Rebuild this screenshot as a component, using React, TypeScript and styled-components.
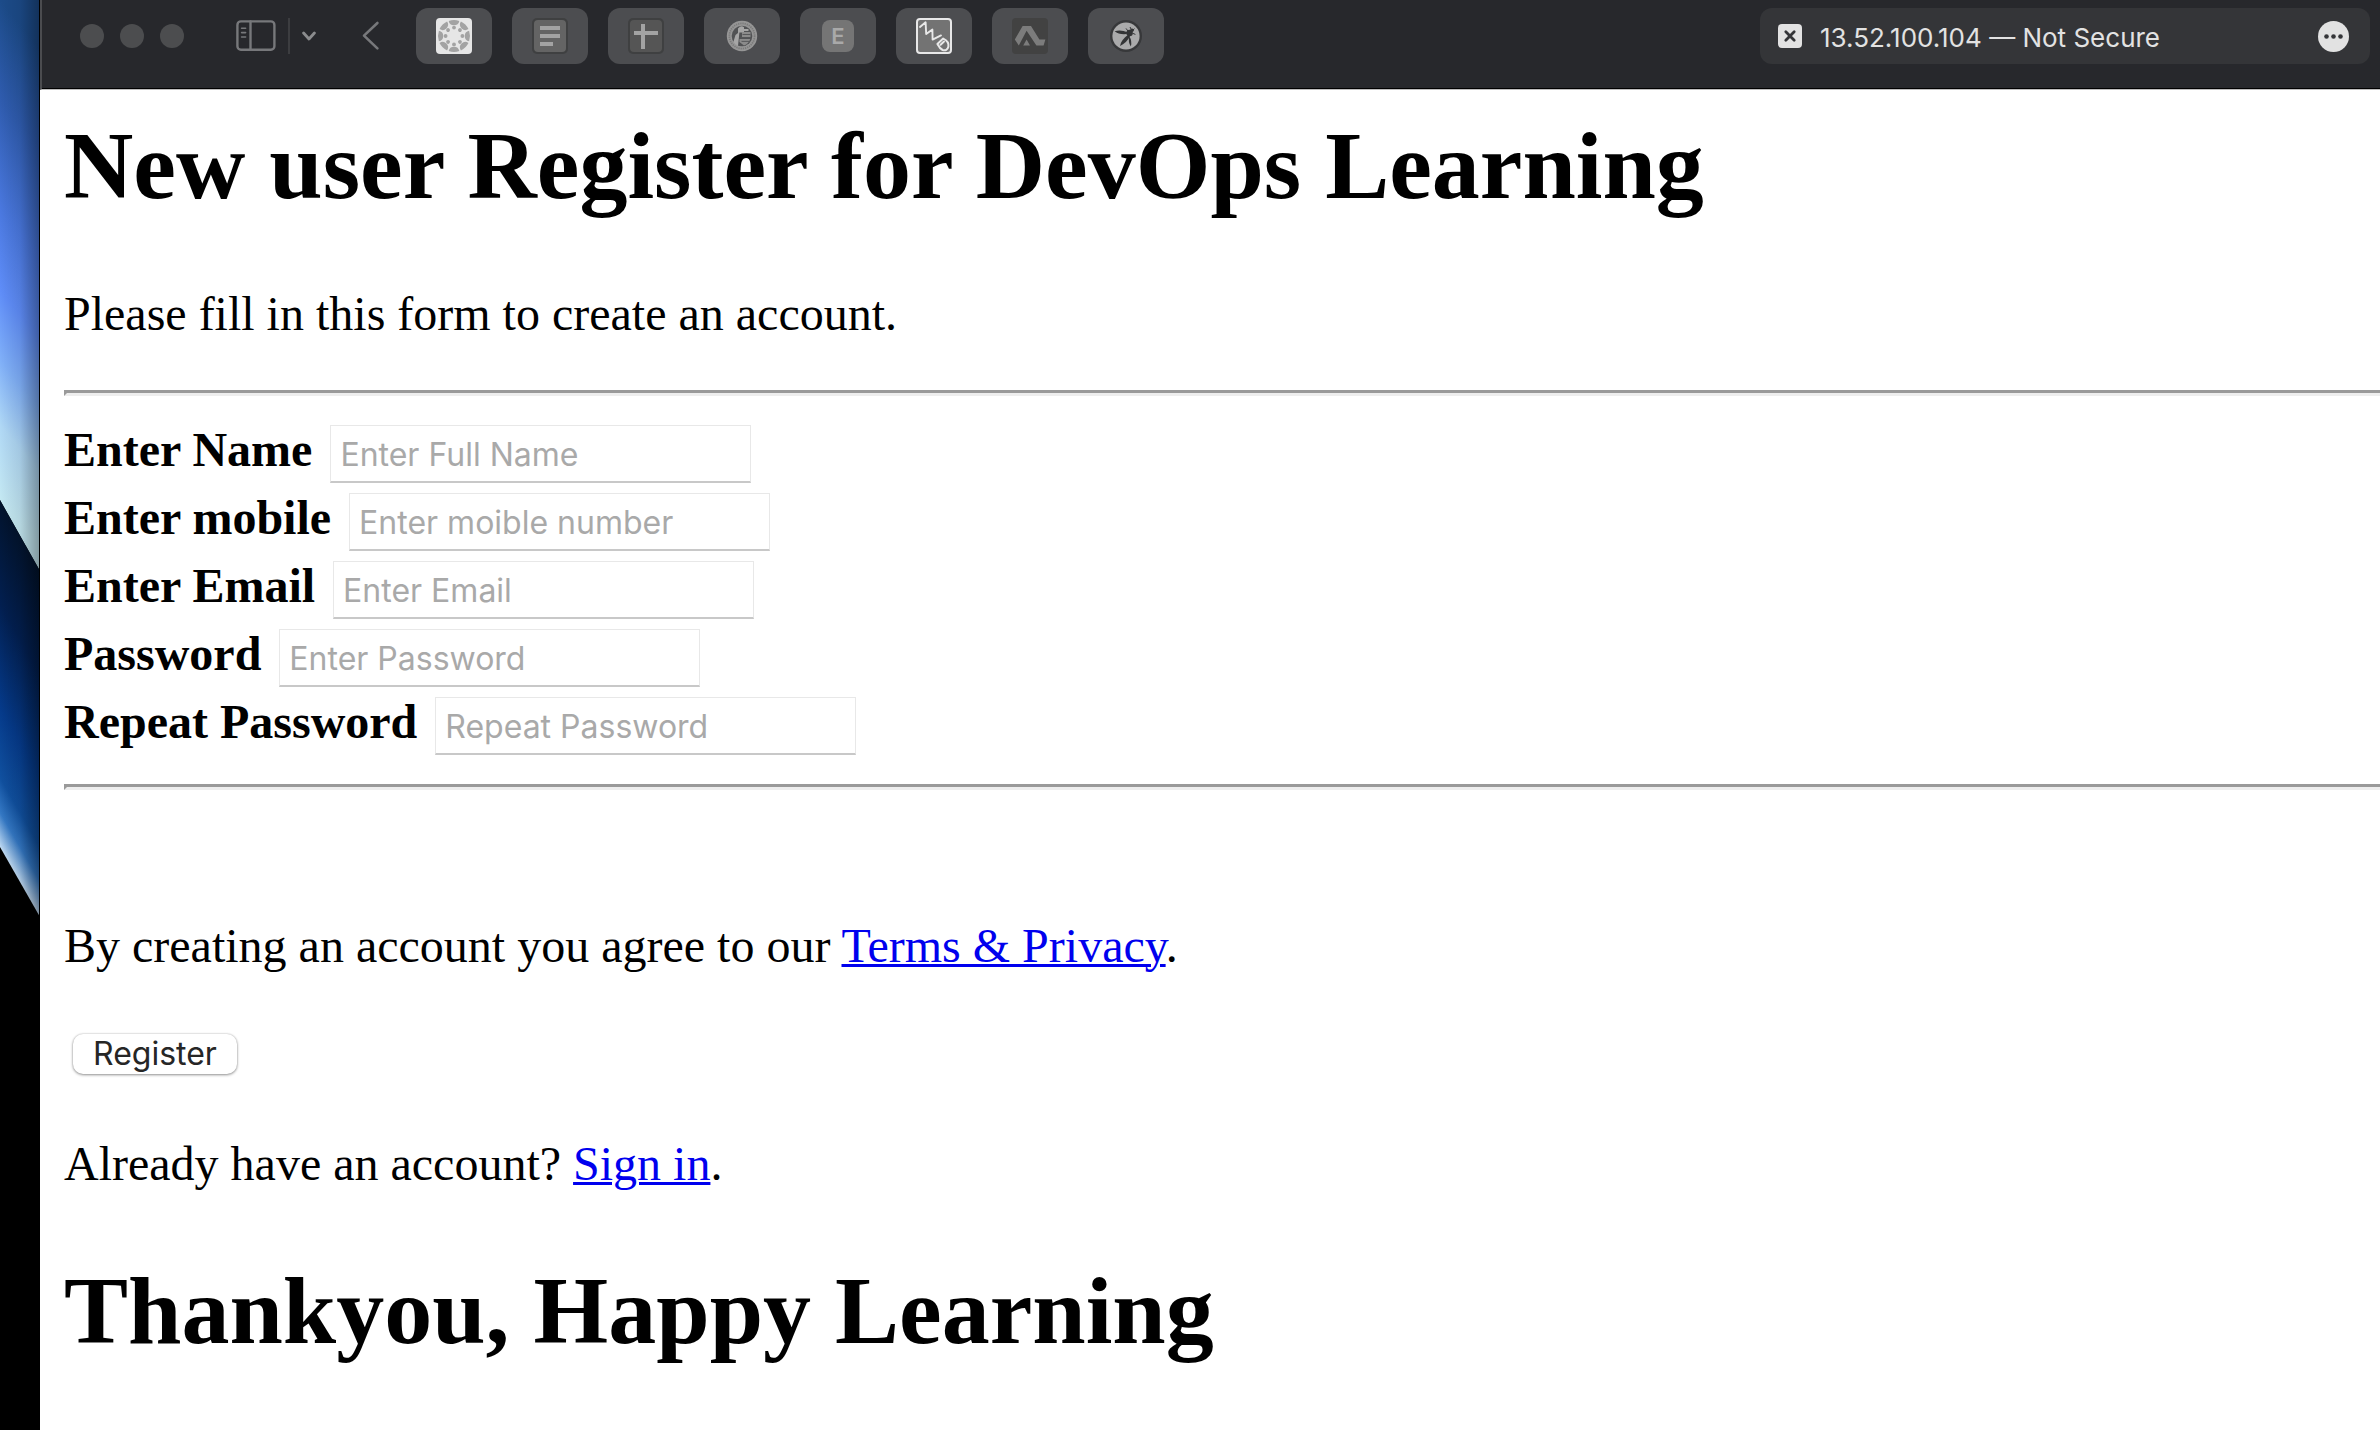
import React from 'react';
import styled, { createGlobalStyle } from 'styled-components';

const serif = '"Liberation Serif", "Times New Roman", serif';
const sans = 'Inter, "Liberation Sans", sans-serif';

const GlobalStyle = createGlobalStyle`
  *, *::before, *::after { box-sizing: border-box; }
  body { margin: 0; background: #fff; color: #000; font-family: ${serif}; font-size: 48px; line-height: 56px; }
  button, input { font-family: ${sans}; }
`;

const Screen = styled.div`
  display: grid;
  grid-template-columns: 40px minmax(0, 1fr);
  min-height: 100vh;
  overflow: hidden;
`;

const Wallpaper = styled.svg`
  display: block;
  width: 40px;
  height: 100%;
  background: #000;
`;

const Window = styled.div`
  display: flex;
  flex-direction: column;
  min-width: 0;
  background: #fff;
`;

const Toolbar = styled.header`
  display: flex;
  align-items: flex-start;
  justify-content: space-between;
  height: 90px;
  padding: 8px 10px 0 38px;
  background: #27282c;
  border-left: 2px solid #4b4c4f;
  border-bottom: 1px solid #bdbdbd;
  box-shadow: inset 0 -1px #000;
`;

const Group = styled.div<{ $gap: number; $before?: number }>`
  display: flex;
  align-items: center;
  height: 56px;
  gap: ${p => p.$gap}px;
  margin-left: ${p => p.$before ?? 0}px;
`;

const PlainButton = styled.button`
  display: flex;
  align-items: center;
  justify-content: center;
  padding: 0;
  border: 0;
  background: none;
`;

const Light = styled(PlainButton)`
  width: 24px;
  height: 24px;
  border-radius: 50%;
  background: #4c4d4f;
`;

const Divider = styled.span`
  width: 2px;
  height: 36px;
  background: #3c3d40;
`;

const Tab = styled(PlainButton)`
  width: 76px;
  height: 56px;
  border-radius: 12px;
  background: #4c4d50;
`;

const Letter = styled.span`
  display: flex;
  align-items: center;
  justify-content: center;
  width: 32px;
  height: 32px;
  border-radius: 8px;
  background: #757575;
  color: #a9a9a9;
  font-size: 22px;
  line-height: 32px;
  font-weight: 600;
`;

const Address = styled.div`
  display: flex;
  align-items: center;
  gap: 18px;
  width: 610px;
  height: 56px;
  padding: 0 21px 0 18px;
  border-radius: 12px;
  background: #343538;
  color: #e2e2e2;
  font-family: ${sans};
  font-size: 26px;
  line-height: 32px;
`;

const AddressText = styled.span`
  flex: 1;
  padding-top: 4px;
  white-space: nowrap;
`;

const Page = styled.main`
  display: flow-root;
  padding: 24px 0 24px 24px;
`;

const Title = styled.h1`
  margin: 0;
  font-size: 96px;
  line-height: 104px;
  font-weight: 700;
`;

const Text = styled.p`
  margin: 0;
`;

const Intro = styled(Text)`
  margin: 68px 0 48px;
`;

const Terms = styled(Text)`
  margin: 128px 0 60px;
`;

const SignIn = styled(Text)`
  margin: 62px 0 67px;
`;

const Rule = styled.hr`
  margin: 0;
  height: 6px;
  border: 3px solid #9a9a9a;
  border-bottom-color: #eee;
  border-right: 0;
`;

const Fields = styled.div`
  padding: 24px 0;
`;

const Row = styled.div`
  display: flex;
  align-items: baseline;
  gap: 18px;
  height: 68px;
  padding-top: 2px;
`;

const Label = styled.label`
  font-weight: 700;
`;

const Field = styled.input`
  width: 421px;
  height: 58px;
  padding: 3px 9px 0;
  border: 1px solid #e8e8e8;
  border-bottom: 2px solid #c8c8c8;
  border-radius: 0;
  background: #fff;
  color: #000;
  font-size: 32px;
  line-height: 40px;
  &::placeholder { color: #a9a9a9; opacity: 1; }
`;

const Submit = styled.button`
  display: block;
  height: 40px;
  margin-left: 9px;
  padding: 0 20px;
  border: 0;
  border-radius: 10px;
  background: #fff;
  box-shadow: 0 1px 3px rgba(0, 0, 0, 0.4), 0 0 2px rgba(0, 0, 0, 0.2);
  color: #262626;
  font-size: 32px;
  line-height: 40px;
`;

const Link = styled.a`
  color: #0000ee;
  text-decoration: underline;
  text-decoration-thickness: 3px;
`;

const Desktop = () => (
  <Wallpaper viewBox="0 0 40 1430" preserveAspectRatio="xMinYMin slice" aria-hidden="true">
    <defs>
      <linearGradient id="sky" gradientUnits="userSpaceOnUse" x1="0" y1="0" x2="0" y2="500" gradientTransform="skewY(50)">
        <stop offset="0" stopColor="#1c4b89" />
        <stop offset="0.2" stopColor="#2f5caf" />
        <stop offset="0.42" stopColor="#4a78df" />
        <stop offset="0.58" stopColor="#5f8df8" />
        <stop offset="0.72" stopColor="#80b0f8" />
        <stop offset="0.85" stopColor="#b0d8f5" />
        <stop offset="1" stopColor="#c4e8f2" />
      </linearGradient>
      <linearGradient id="sea" gradientUnits="userSpaceOnUse" x1="0" y1="500" x2="0" y2="847" gradientTransform="skewY(60)">
        <stop offset="0" stopColor="#02132c" />
        <stop offset="0.3" stopColor="#021f50" />
        <stop offset="0.6" stopColor="#053a8a" />
        <stop offset="0.8" stopColor="#10509f" />
        <stop offset="0.9" stopColor="#3478c4" />
        <stop offset="1" stopColor="#c0daf2" />
      </linearGradient>
      <linearGradient id="shade" x1="0" y1="0" x2="1" y2="0">
        <stop offset="0" stopColor="#000" stopOpacity="0" />
        <stop offset="0.5" stopColor="#000" stopOpacity="0.08" />
        <stop offset="1" stopColor="#000" stopOpacity="0.35" />
      </linearGradient>
    </defs>
    <path d="M0 0H40V571L0 500Z" fill="url(#sky)" />
    <path d="M0 500L40 571V917L0 847Z" fill="url(#sea)" />
    <rect width="40" height="1430" fill="url(#shade)" />
    <rect x="39" width="1" height="1430" fill="#000" />
  </Wallpaper>
);

const SidebarIcon = () => (
  <svg width="40" height="32" viewBox="0 0 40 32" fill="none" stroke="#77787b" strokeWidth="2.4" strokeLinecap="round">
    <rect x="1.4" y="1.4" width="37" height="28.4" rx="3.5" />
    <path d="M14.5 1.4V29.8" />
    <path d="M5.6 8.2h4M5.6 12.6h4M5.6 17h4" strokeWidth="1.6" />
  </svg>
);

const ChevronIcon = () => (
  <svg width="14" height="10" viewBox="0 0 14 10" fill="none" stroke="#8b8c8e" strokeWidth="2.8" strokeLinecap="round" strokeLinejoin="round">
    <path d="M1.6 2L7 8L12.4 2" />
  </svg>
);

const BackIcon = () => (
  <svg width="18" height="30" viewBox="0 0 18 30" fill="none" stroke="#77787b" strokeWidth="2.6" strokeLinecap="round" strokeLinejoin="round">
    <path d="M15.4 2L2 14.6L15.4 27.4" />
  </svg>
);

const spokes = [0, 45, 90, 135, 180, 225, 270, 315];

const CanvasIcon = () => (
  <svg width="36" height="36" viewBox="0 0 36 36">
    <rect width="36" height="36" rx="4" fill="#e6e6e6" />
    <g fill="#a3a3a3">
      {spokes.map(a => (
        <g key={a} transform={`rotate(${a} 18 18)`}>
          <path d="M12.7 2.9A16.2 16.2 0 0 1 23.3 2.9A5.4 5.4 0 0 1 12.7 2.9Z" />
          <circle cx="18" cy="9.6" r="1.9" />
        </g>
      ))}
    </g>
  </svg>
);

const LinesIcon = () => (
  <svg width="36" height="36" viewBox="0 0 36 36">
    <rect width="36" height="36" rx="5" fill="#3f4041" />
    <rect x="2" y="2" width="32" height="32" rx="4" fill="#646464" />
    <path d="M8 8h20v4H8zM8 16h20v4H8zM8 24h13v4H8z" fill="#a3a3a3" />
  </svg>
);

const CrossIcon = () => (
  <svg width="36" height="36" viewBox="0 0 36 36">
    <rect width="36" height="36" rx="5" fill="#3f4041" />
    <rect x="2" y="2" width="32" height="32" rx="4" fill="#555" />
    <path d="M13 6h4v7h13v4H17v14h-4V17H6v-4h7z" fill="#a3a3a3" />
  </svg>
);

const SealIcon = () => (
  <svg width="32" height="32" viewBox="0 0 32 32" fill="none">
    <circle cx="16" cy="16" r="15.2" fill="#969696" />
    <circle cx="16" cy="16" r="12.6" stroke="#7b7b7b" strokeWidth="1.8" strokeDasharray="1.3 0.9" />
    <circle cx="16" cy="16" r="10.3" fill="#515254" />
    <path d="M12 8.5Q15 5 18 7.2V9h4.5v2H18v1.5h-4.6L12 26Q8.6 24.5 7.4 22L9.5 15L12 13Z" fill="#a6a6a6" />
    <path d="M16 12h8.5v5H16zM13.5 19h10.8Q22.8 23.8 18 25.6L13.4 22Z" fill="#8b8b8b" />
    <path d="M16.5 14.5h8M15 17.8h10M15.5 21.4h8.4" stroke="#58595b" strokeWidth="1" />
  </svg>
);

const NvdIcon = () => (
  <svg width="36" height="36" viewBox="0 0 36 36" fill="none" stroke="#e8e8e8" strokeLinecap="round" strokeLinejoin="round">
    <rect x="1" y="1" width="34" height="34" rx="3" fill="#737373" strokeWidth="2" />
    <path d="M4 9L9.6 4.3L10.2 16L16.4 11.6M16.4 11.6L16.6 21.6L25 17.4" strokeWidth="1.9" />
    <path d="M21.4 26L27.2 20.6Q33.2 23.4 32.4 28.6Q31 33.4 26.6 32Q23.8 30.6 21.4 26ZM24.6 26.8L28 23.6" strokeWidth="2" />
  </svg>
);

const PeakIcon = () => (
  <svg width="36" height="36" viewBox="0 0 36 36">
    <rect width="36" height="36" rx="4" fill="#424242" />
    <path d="M10.6 8H19L27.4 21.5H33.4L31.6 27.4H24.4L14.6 12.8L6.8 27.4L2.8 21.6ZM14.6 21.6L18 27.4H11.2Z" fill="#7c7c7c" />
  </svg>
);

const WaspIcon = () => (
  <svg width="32" height="32" viewBox="0 0 32 32">
    <circle cx="16" cy="16" r="16" fill="#37383a" />
    <circle cx="16" cy="16" r="13.6" fill="#aaaaab" />
    <g fill="#333436">
      <path d="M4.6 11.2Q11 9.6 17.6 12.2L16.6 14Q9 14.8 4.6 11.2Z" />
      <path d="M18.6 14.6L20 16.2Q17 22.4 10 26Q11.4 19.4 18.6 14.6Z" />
      <path d="M19.4 16.2Q22.4 21.4 20.8 26.6Q17.8 21.6 19.4 16.2Z" />
      <circle cx="19.6" cy="13" r="3.2" />
      <circle cx="22" cy="10.2" r="1.8" />
    </g>
    <path d="M18 11L16 8.4M21.5 10L20 7M22.4 13.2L25.4 14.4M22.4 10.8L24.4 8.6" stroke="#333436" strokeWidth="1" />
  </svg>
);

const SiteIcon = () => (
  <svg width="24" height="24" viewBox="0 0 24 24">
    <rect width="24" height="24" rx="4" fill="#e2e2e2" />
    <path d="M7.8 7.8L16.2 16.2M16.2 7.8L7.8 16.2" stroke="#343538" strokeWidth="2.8" strokeLinecap="round" />
  </svg>
);

const MoreIcon = () => (
  <svg width="31" height="31" viewBox="0 0 31 31">
    <circle cx="15.5" cy="15.5" r="15.5" fill="#e2e2e2" />
    <g fill="#343538">
      <circle cx="8.5" cy="15.5" r="2.3" />
      <circle cx="15.5" cy="15.5" r="2.3" />
      <circle cx="22.5" cy="15.5" r="2.3" />
    </g>
  </svg>
);

const tabs = [
  { name: 'Canvas', icon: <CanvasIcon /> },
  { name: 'Document', icon: <LinesIcon /> },
  { name: 'Sheet', icon: <CrossIcon /> },
  { name: 'University', icon: <SealIcon /> },
  { name: 'E', icon: <Letter>E</Letter> },
  { name: 'NVD', icon: <NvdIcon /> },
  { name: 'Peak', icon: <PeakIcon /> },
  { name: 'OWASP', icon: <WaspIcon /> },
];

const fields = [
  { id: 'name', label: 'Enter Name', placeholder: 'Enter Full Name', type: 'text' },
  { id: 'mobile', label: 'Enter mobile', placeholder: 'Enter moible number', type: 'text' },
  { id: 'email', label: 'Enter Email', placeholder: 'Enter Email', type: 'text' },
  { id: 'psw', label: 'Password', placeholder: 'Enter Password', type: 'password' },
  { id: 'psw-repeat', label: 'Repeat Password', placeholder: 'Repeat Password', type: 'password' },
];

export default function App() {
  return (
    <Screen>
      <GlobalStyle />
      <Desktop />
      <Window>
        <Toolbar>
          <Group $gap={0}>
            <Group $gap={16}>
              <Light aria-label="Close" />
              <Light aria-label="Minimize" />
              <Light aria-label="Zoom" />
            </Group>
            <Group $gap={12} $before={52}>
              <PlainButton aria-label="Sidebar"><SidebarIcon /></PlainButton>
              <Divider />
              <PlainButton aria-label="Tab groups"><ChevronIcon /></PlainButton>
            </Group>
            <Group $gap={36} $before={46}>
              <PlainButton aria-label="Back"><BackIcon /></PlainButton>
              <Group $gap={20}>
                {tabs.map(t => <Tab key={t.name} aria-label={t.name}>{t.icon}</Tab>)}
              </Group>
            </Group>
          </Group>
          <Address>
            <SiteIcon />
            <AddressText>13.52.100.104 — Not Secure</AddressText>
            <PlainButton aria-label="More"><MoreIcon /></PlainButton>
          </Address>
        </Toolbar>
        <Page>
          <form onSubmit={e => e.preventDefault()}>
            <Title>New user Register for DevOps Learning</Title>
            <Intro>Please fill in this form to create an account.</Intro>
            <Rule />
            <Fields>
              {fields.map(f => (
                <Row key={f.id}>
                  <Label htmlFor={f.id}>{f.label}</Label>
                  <Field id={f.id} type={f.type} placeholder={f.placeholder} />
                </Row>
              ))}
            </Fields>
            <Rule />
            <Terms>By creating an account you agree to our <Link href="#terms">Terms &amp; Privacy</Link>.</Terms>
            <Submit type="submit">Register</Submit>
            <SignIn>Already have an account? <Link href="#signin">Sign in</Link>.</SignIn>
            <Title>Thankyou, Happy Learning</Title>
          </form>
        </Page>
      </Window>
    </Screen>
  );
}
